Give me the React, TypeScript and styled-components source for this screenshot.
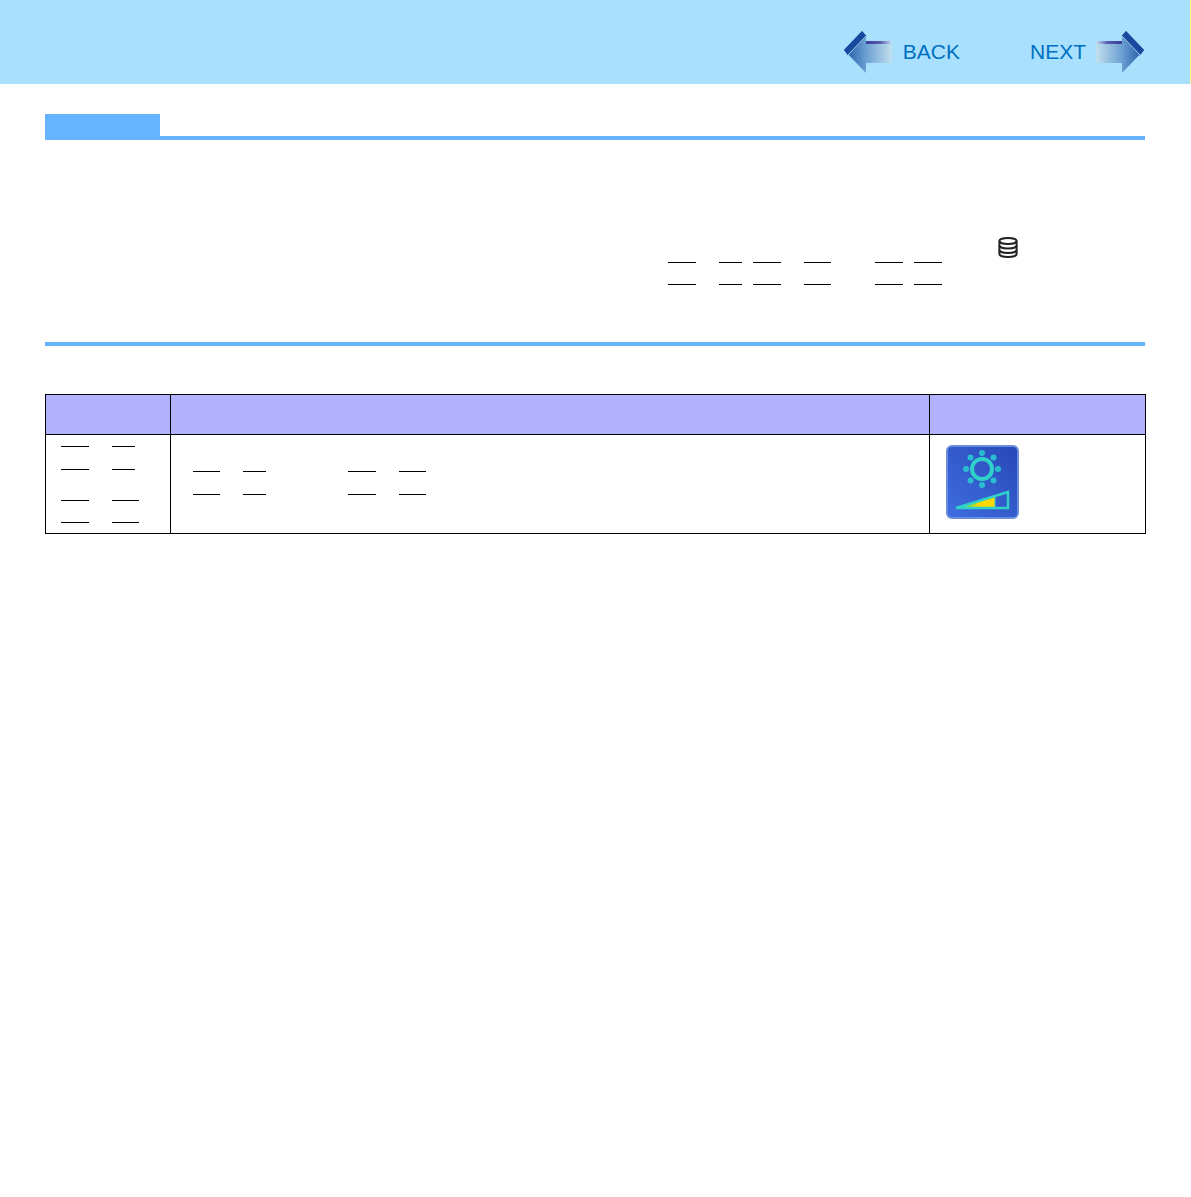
import styled, { createGlobalStyle } from 'styled-components';

const GlobalStyle = createGlobalStyle`
  html, body {
    margin: 0;
    padding: 0;
    background: #fff;
    font-family: "Liberation Sans", Arial, sans-serif;
  }
`;

const Page = styled.div`
  width: 1191px;
  min-height: 1197px;
  background: #fff;
`;

const TopBar = styled.header`
  box-sizing: border-box;
  height: 84px;
  display: flex;
  align-items: flex-start;
  justify-content: flex-end;
  padding: 31px 46px 0 0;
  background: #a8e0fd;
  border-right: 1px solid #f5f58c;
`;

const NavLink = styled.a`
  display: flex;
  align-items: center;
  gap: ${(p) => p.$gap}px;
  margin-left: ${(p) => p.$left || 0}px;
  height: 42px;
  color: #0070c0;
  font-size: 21px;
  line-height: 40px;
`;

const Main = styled.main`
  padding: 30px 45px 0;
`;

const NoteHead = styled.div`
  height: 26px;
  margin-right: 1px;
  border-bottom: 4px solid #66b3ff;
  box-sizing: border-box;
`;

const NoteTab = styled.div`
  width: 115px;
  height: 26px;
  background: #66b3ff;
`;

const IconRow = styled.div`
  display: flex;
  margin-top: 97px;
  padding-left: 953px;
  height: 21px;
`;

const KeyLine = styled.div`
  display: flex;
  height: 1px;
  margin-top: ${(p) => p.$top}px;
  padding-left: ${(p) => p.$indent || 0}px;
`;

const KeyMark = styled.span`
  width: ${(p) => p.$w}px;
  height: 1px;
  margin-left: ${(p) => p.$gap || 0}px;
  background: #000;
`;

const Divider = styled.div`
  height: 4px;
  margin-top: 57px;
  margin-right: 1px;
  background: #66b3ff;
`;

const Table = styled.div`
  display: grid;
  grid-template-columns: 125px 759px 216px;
  grid-template-rows: 40px 99px;
  width: 1101px;
  margin-top: 48px;
  border-top: 1px solid #000;
  border-left: 1px solid #000;
  box-sizing: border-box;
`;

const HeadCell = styled.div`
  background: #b2b2ff;
  border-right: 1px solid #000;
  border-bottom: 1px solid #000;
`;

const BodyCell = styled.div`
  box-sizing: border-box;
  padding: ${(p) => p.$pad || '0'};
  border-right: 1px solid #000;
  border-bottom: 1px solid #000;
`;

const Arrow = ({ flip }: { flip?: boolean }) => {
  const id = flip ? 'next' : 'back';
  return (
    <svg width="48" height="42" viewBox="0 0 48 42" style={flip ? { transform: 'scaleX(-1)' } : undefined}>
      <defs>
        <linearGradient id={`${id}-body`} x1="0" x2="1" y1="0" y2="0">
          <stop offset="0" stopColor="#1b57a6" />
          <stop offset="0.45" stopColor="#6a9ed2" />
          <stop offset="1" stopColor="#c2e0ee" />
        </linearGradient>
        <linearGradient id={`${id}-top`} x1="0" x2="1" y1="0" y2="0">
          <stop offset="0" stopColor="#3b3a9c" />
          <stop offset="0.55" stopColor="#5a5ab0" />
          <stop offset="1" stopColor="#c2e0ee" />
        </linearGradient>
      </defs>
      <path d="M0 19 18 0 22 5V10H48V32H22V42Z" fill={`url(#${id}-body)`} />
      <rect x="22" y="10" width="26" height="3" fill={`url(#${id}-top)`} />
      <path d="M0 19 18 0 22.5 5 4 24.5Z" fill="#17499f" />
      <path d="M4 24 22 5" stroke="#b4d2e8" strokeWidth="1" fill="none" />
    </svg>
  );
};

const DiskIcon = () => (
  <svg width="20" height="21" viewBox="0 0 20 21" fill="none" stroke="#222" strokeWidth="2">
    <ellipse cx="10" cy="4" rx="8.6" ry="3" />
    <path d="M1.4 4V17C1.4 18.7 5.2 20 10 20S18.6 18.7 18.6 17V4" />
    <path d="M1.4 8.5C1.4 10.2 5.2 11.5 10 11.5S18.6 10.2 18.6 8.5" />
    <path d="M1.4 13C1.4 14.7 5.2 16 10 16S18.6 14.7 18.6 13" />
  </svg>
);

const BrightnessIcon = () => (
  <svg width="73" height="74" viewBox="0 0 73 74">
    <defs>
      <linearGradient id="tile" x1="0" x2="1" y1="1" y2="0">
        <stop offset="0" stopColor="#3f6ee0" />
        <stop offset="1" stopColor="#2848b8" />
      </linearGradient>
      <linearGradient id="level" x1="0" x2="1" y1="0" y2="0">
        <stop offset="0" stopColor="#2fd08c" />
        <stop offset="0.45" stopColor="#b8d830" />
        <stop offset="0.6" stopColor="#ffd800" />
        <stop offset="1" stopColor="#ffd800" />
      </linearGradient>
    </defs>
    <rect x="1" y="1" width="71" height="72" rx="5" fill="url(#tile)" stroke="#6c8cdc" strokeWidth="2" />
    <circle cx="36" cy="24" r="10" fill="none" stroke="#2ed2c8" strokeWidth="4" />
    <g fill="#2bbcd0">
      <circle cx="36" cy="8" r="3" />
      <circle cx="36" cy="40" r="3" />
      <circle cx="20" cy="24" r="3" />
      <circle cx="52" cy="24" r="3" />
      <circle cx="24.5" cy="12.5" r="3" />
      <circle cx="47.5" cy="12.5" r="3" />
      <circle cx="24.5" cy="35.5" r="3" />
      <circle cx="47.5" cy="35.5" r="3" />
    </g>
    <path d="M10 63 49 51V63Z" fill="url(#level)" />
    <path d="M49 51V63" stroke="#2ed2c8" strokeWidth="1" />
    <path d="M10 63 62 47V63Z" fill="none" stroke="#2ed2c8" strokeWidth="2.5" />
  </svg>
);

const App = () => (
  <>
    <GlobalStyle />
    <Page>
      <TopBar>
        <NavLink $gap={11}>
          <Arrow />
          BACK
        </NavLink>
        <NavLink $gap={10} $left={70}>
          NEXT
          <Arrow flip />
        </NavLink>
      </TopBar>
      <Main>
        <NoteHead>
          <NoteTab />
        </NoteHead>
        <IconRow>
          <DiskIcon />
        </IconRow>
        <KeyLine $top={4} $indent={623}>
          <KeyMark $w={28} />
          <KeyMark $w={23} $gap={23} />
          <KeyMark $w={28} $gap={11} />
          <KeyMark $w={27} $gap={23} />
          <KeyMark $w={28} $gap={44} />
          <KeyMark $w={28} $gap={11} />
        </KeyLine>
        <KeyLine $top={21} $indent={623}>
          <KeyMark $w={28} />
          <KeyMark $w={23} $gap={23} />
          <KeyMark $w={28} $gap={11} />
          <KeyMark $w={27} $gap={23} />
          <KeyMark $w={28} $gap={44} />
          <KeyMark $w={28} $gap={11} />
        </KeyLine>
        <Divider />
        <Table>
          <HeadCell />
          <HeadCell />
          <HeadCell />
          <BodyCell $pad="11px 0 0 15px">
            <KeyLine $top={0}>
              <KeyMark $w={28} />
              <KeyMark $w={23} $gap={23} />
            </KeyLine>
            <KeyLine $top={22}>
              <KeyMark $w={28} />
              <KeyMark $w={23} $gap={23} />
            </KeyLine>
            <KeyLine $top={30}>
              <KeyMark $w={28} />
              <KeyMark $w={27} $gap={23} />
            </KeyLine>
            <KeyLine $top={21}>
              <KeyMark $w={28} />
              <KeyMark $w={27} $gap={23} />
            </KeyLine>
          </BodyCell>
          <BodyCell $pad="36px 0 0 22px">
            <KeyLine $top={0}>
              <KeyMark $w={27} />
              <KeyMark $w={23} $gap={23} />
              <KeyMark $w={28} $gap={82} />
              <KeyMark $w={27} $gap={23} />
            </KeyLine>
            <KeyLine $top={22}>
              <KeyMark $w={27} />
              <KeyMark $w={23} $gap={23} />
              <KeyMark $w={28} $gap={82} />
              <KeyMark $w={27} $gap={23} />
            </KeyLine>
          </BodyCell>
          <BodyCell $pad="10px 0 0 16px">
            <BrightnessIcon />
          </BodyCell>
        </Table>
      </Main>
    </Page>
  </>
);

export default App;
